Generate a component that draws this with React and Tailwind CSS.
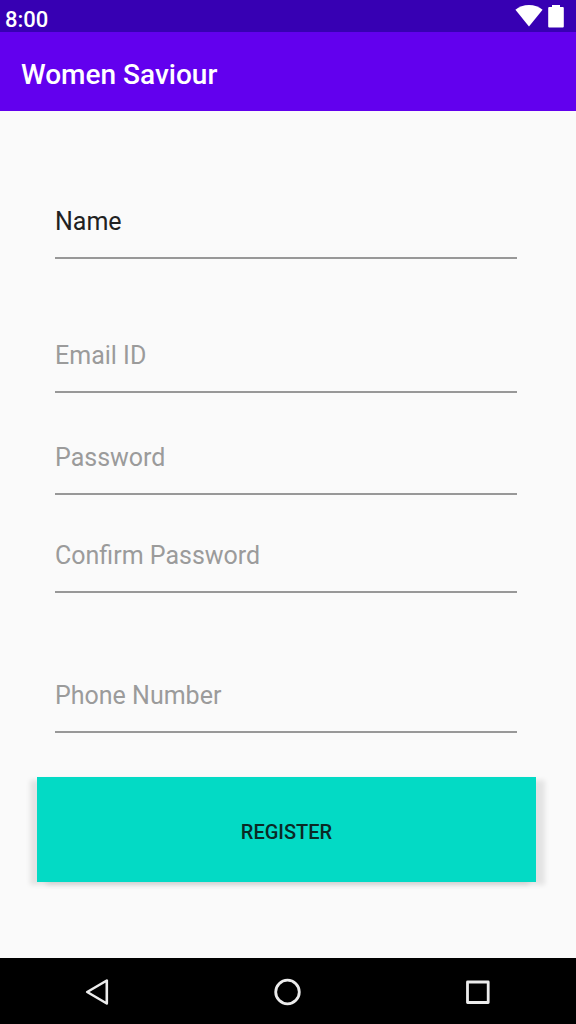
import React from "react";

const fields = [
  { id: "name", type: "text", label: "Name", defaultValue: "Name", gap: "mt-[86px]" },
  { id: "email", type: "email", label: "Email ID", placeholder: "Email ID", gap: "mt-[72px]" },
  { id: "password", type: "password", label: "Password", placeholder: "Password", gap: "mt-10" },
  { id: "confirm", type: "password", label: "Confirm Password", placeholder: "Confirm Password", gap: "mt-9" },
  { id: "phone", type: "tel", label: "Phone Number", placeholder: "Phone Number", gap: "mt-[78px]" },
];

function StatusBar() {
  return (
    <div className="flex h-8 items-center justify-between bg-[#3700b3] pl-[5px] pr-3 text-white">
      <span className="pt-2 text-[22px] leading-8 font-medium">8:00</span>
      <span className="flex items-center gap-[5px]">
        <svg className="h-[22px] w-7" viewBox="0 0 28 22" fill="currentColor" aria-hidden="true">
          <path d="M14 21.5 0.4 4.8C4 1.9 8.8 0 14 0s10 1.9 13.6 4.8z" />
        </svg>
        <svg className="h-[23px] w-4" viewBox="0 0 16 23" fill="currentColor" aria-hidden="true">
          <path d="M4 0h8v2h2.800a1 1 0 0 1 1 1v18.500a1 1 0 0 1-1 1H1.200a1 1 0 0 1-1-1V3a1 1 0 0 1 1-1H4z" />
        </svg>
      </span>
    </div>
  );
}

function NavBar() {
  return (
    <nav className="flex h-[66px] items-center justify-around bg-black px-1 pt-[2px] text-[#ececec]">
      <button type="button" aria-label="Back" className="p-2">
        <svg className="h-7 w-7" viewBox="0 0 28 28" fill="none" stroke="currentColor" strokeWidth="2.6" strokeLinejoin="round" aria-hidden="true">
          <path d="M21.800 2.500v23L2.200 14z" />
        </svg>
      </button>
      <button type="button" aria-label="Home" className="p-2">
        <svg className="h-7 w-7" viewBox="0 0 28 28" fill="none" stroke="currentColor" strokeWidth="2.8" aria-hidden="true">
          <circle cx="13.500" cy="14" r="11.800" />
        </svg>
      </button>
      <button type="button" aria-label="Recent apps" className="p-2">
        <svg className="h-7 w-7" viewBox="0 0 28 28" fill="none" stroke="currentColor" strokeWidth="2.8" strokeLinejoin="round" aria-hidden="true">
          <path d="M4.500 4h20.700v20.500H4.500z" />
        </svg>
      </button>
    </nav>
  );
}

export default function App() {
  return (
    <div className="flex min-h-screen flex-col bg-[#fafafa] font-['Roboto',sans-serif]">
      <StatusBar />
      <header className="flex h-[79px] items-center bg-[#6200ee] px-[21px] pt-[6px]">
        <h1 className="text-[28px] leading-8 font-medium text-white">Women Saviour</h1>
      </header>
      <main className="flex-1">
        <form className="flex flex-col" onSubmit={(e) => e.preventDefault()}>
          <div className="flex flex-col pl-[55px] pr-[59px]">
            {fields.map(({ id, label, gap, ...input }) => (
              <input
                key={id}
                id={id}
                name={id}
                aria-label={label}
                className={`h-[62px] w-full border-b-2 border-[#989898] bg-transparent pb-3 text-[25px] text-[#212121] outline-none placeholder:text-[#9b9b9b] ${gap}`}
                {...input}
              />
            ))}
          </div>
          <button
            type="submit"
            className="mt-11 mr-10 mb-[76px] ml-[37px] h-[105px] bg-[#03dac5] pt-1 text-xl font-medium text-[#0b2925] shadow-[-7px_3px_5px_rgba(0,0,0,0.09),9px_3px_5px_rgba(0,0,0,0.09)]"
          >
            REGISTER
          </button>
        </form>
      </main>
      <NavBar />
    </div>
  );
}
